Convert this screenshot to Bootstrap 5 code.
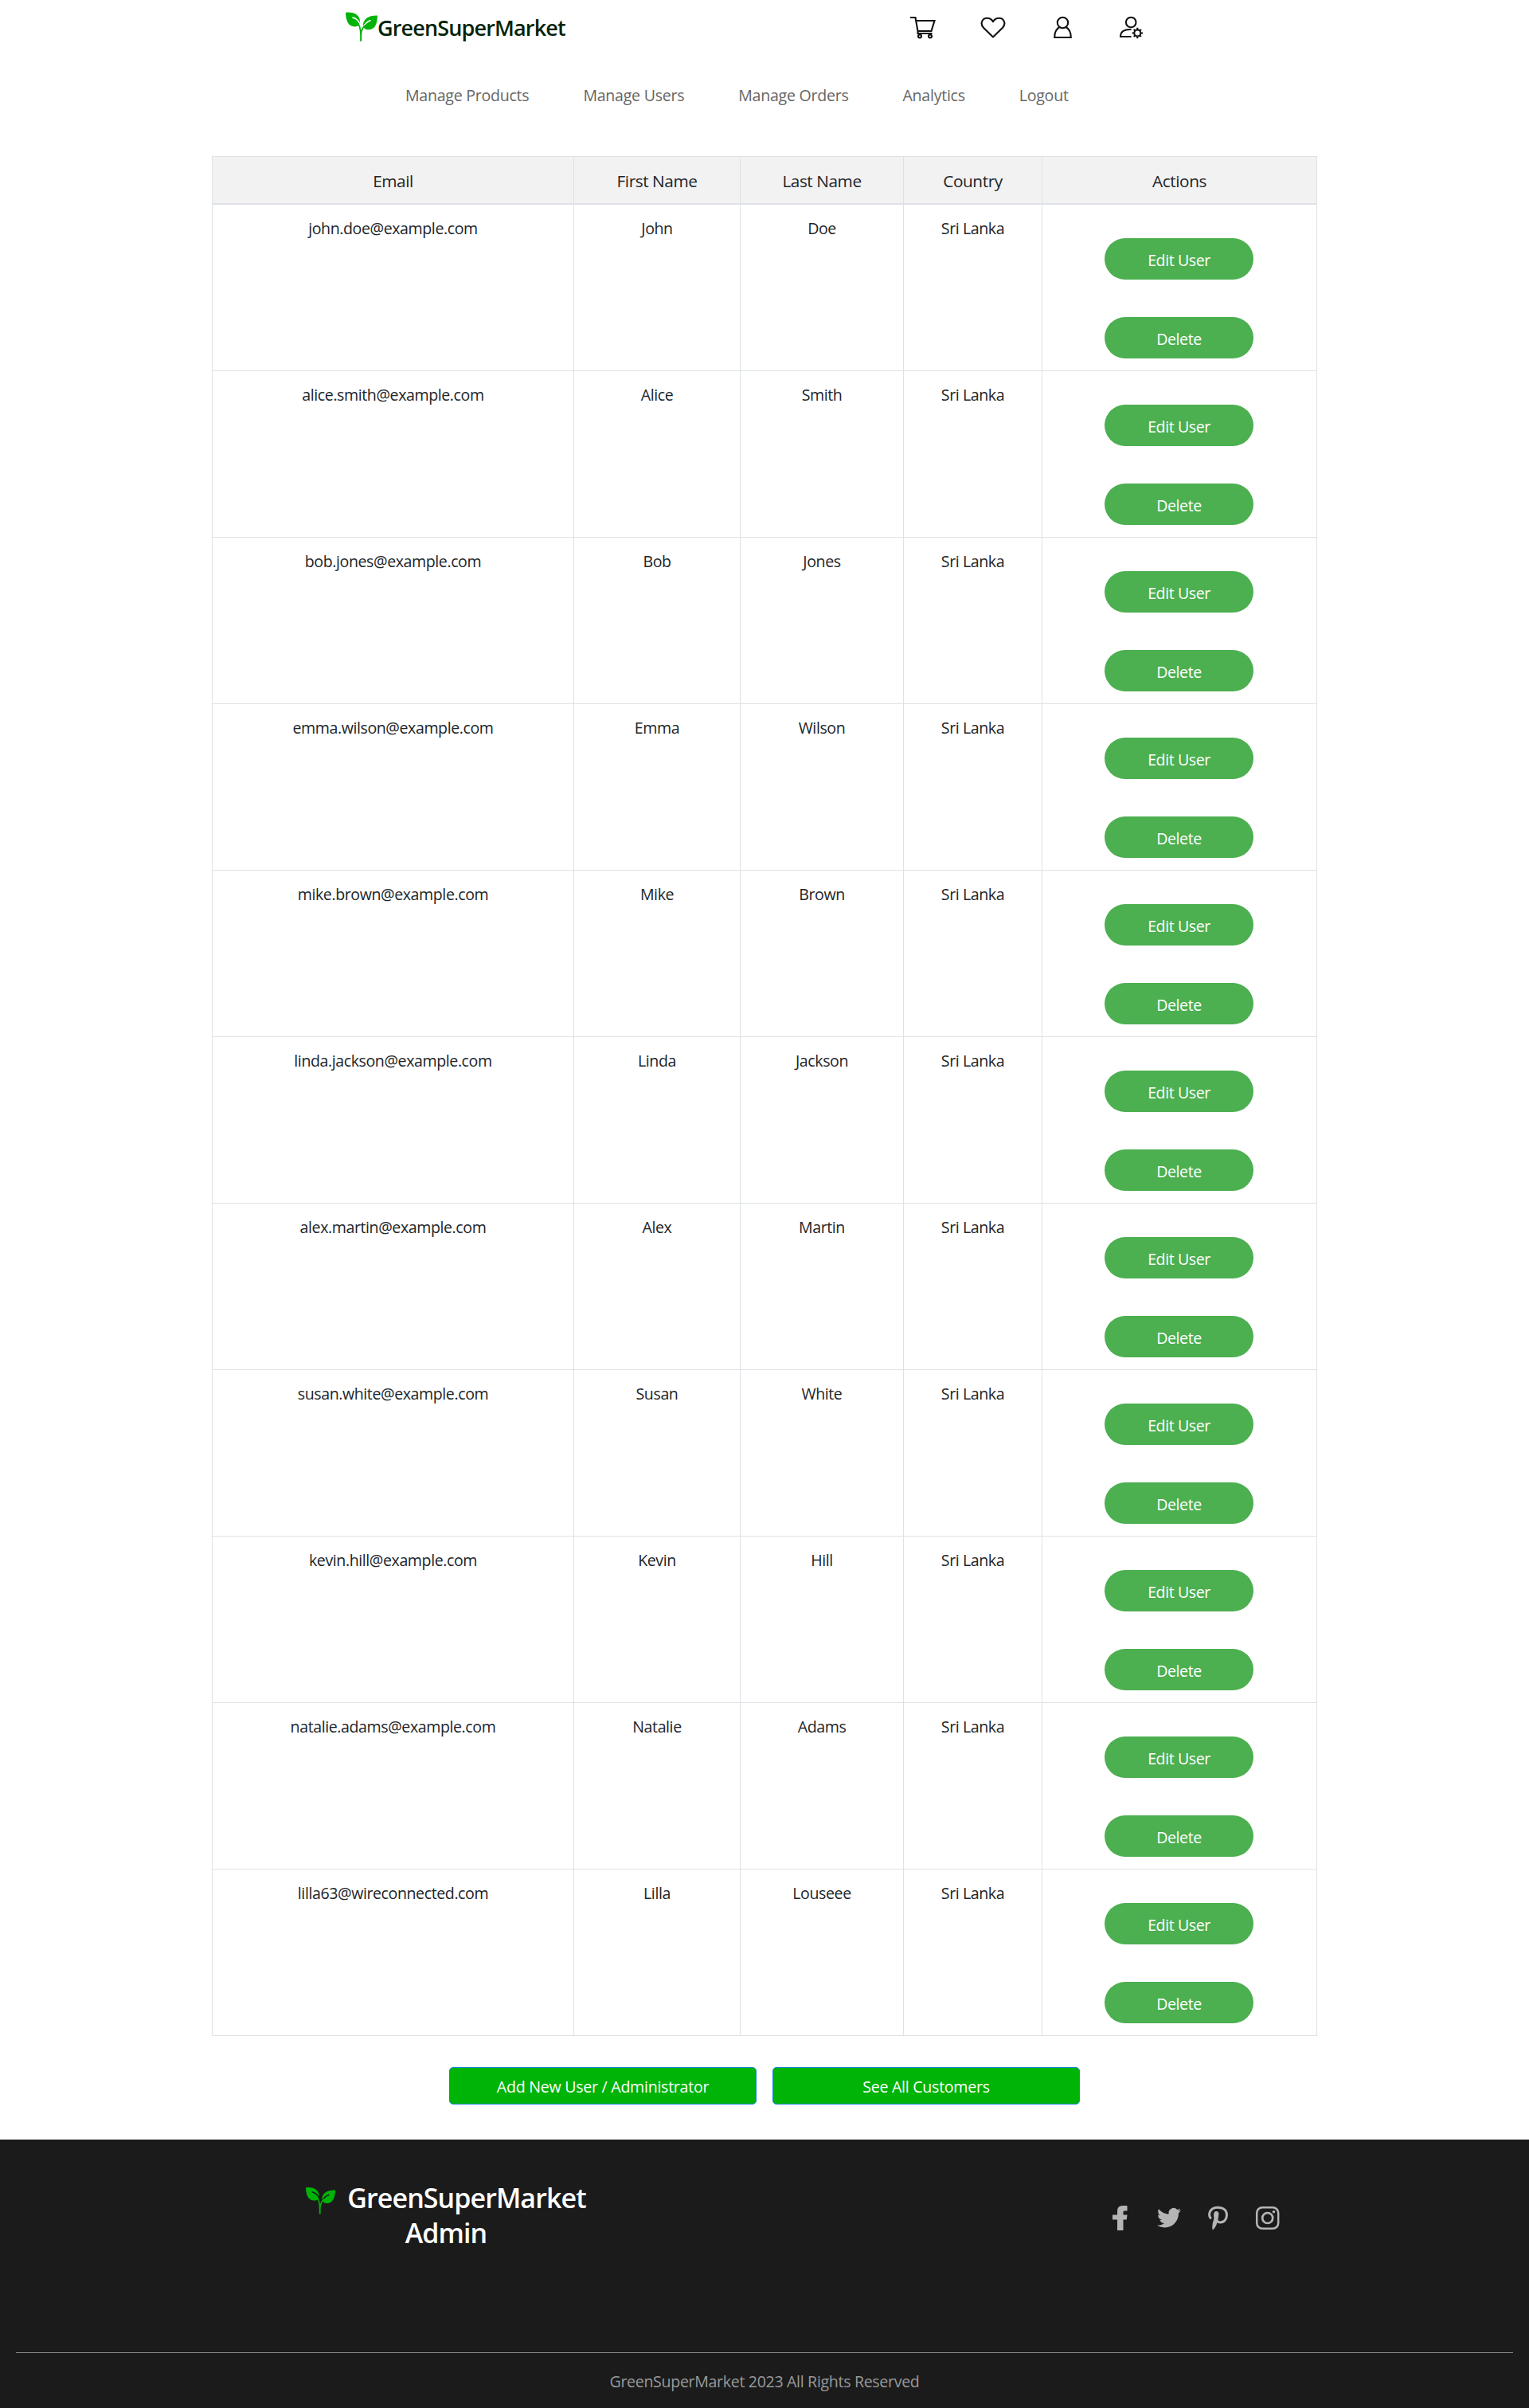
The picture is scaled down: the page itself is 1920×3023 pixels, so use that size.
<!DOCTYPE html>
<html lang="en">
<head>
<meta charset="utf-8">
<meta name="viewport" content="width=device-width, initial-scale=1">
<title>GreenSuperMarket Admin</title>
<link href="https://cdn.jsdelivr.net/npm/bootstrap@5.3.0/dist/css/bootstrap.min.css" rel="stylesheet">
<style>
body{font-family:"Open Sans","Noto Sans",sans-serif;font-size:19.6px;letter-spacing:-.27px;line-height:30px;color:#212529;background:#fff}
svg{display:block;flex:none}
.top-bar{height:70px;padding:0 483px 0 434px}
.brand{color:#03240a;font-size:27px;font-weight:600;letter-spacing:-.85px;line-height:36px;padding-top:17px}
.brand-logo{margin-top:15px}
.tools{padding-top:19px}
.tools svg{fill:none;stroke:#111;stroke-width:2.1}
.tool-cart{margin-right:55px}.tool-heart{margin-right:59px}.tool-user{margin-right:58px}
.main-nav{height:126px;padding:35px 0 0 509px;gap:68px}
.main-nav .nav-link{padding:0;color:#666}
.users{width:1388px;border-collapse:separate;border-spacing:0;table-layout:fixed;border:solid #dee2e6;border-width:1px 0 0 1px;margin:0 0 0 266px;text-align:center}
.users th,.users td{border:solid #dee2e6;border-width:0 1px 1px 0;padding:0;vertical-align:top}
.users th{height:60px;border-bottom-width:2px;background:#f2f2f2;font-weight:400;font-size:20.8px;letter-spacing:-.45px;vertical-align:middle;padding-top:1px}
.users td{height:209px;padding-top:15px;letter-spacing:-.42px}
.users td.acts{padding-top:42px}
.pill{display:block;width:187px;height:52px;margin:0 78px 47px;border:0;border-radius:26px;background:#4caf50;color:#fff;padding:4px 0 0;letter-spacing:-.42px}
.pill+.pill{margin-bottom:0}
.bottom-actions{gap:20px;padding:39px 0 44px}
.bottom-actions .btn{width:386px;height:47px;padding:2px 0 0;border:1px solid #1683d8;border-radius:5px;background:#00b307;color:#fff;font-size:inherit;letter-spacing:-.27px;line-height:inherit}
.site-footer{height:337px;background:#1b1b1b;padding:0 20px}
.foot-main{height:267px;padding:51px 293px 0 360px}
.foot-title{width:360px;color:#fff;font-size:34px;font-weight:600;line-height:44px;letter-spacing:-.92px}
.foot-logo{margin:8px 15px 0 0}
.social{height:32px;margin-top:31px}
.social svg{fill:#b5b5b5}
.copyright{border-top:1px solid #888;color:#999;padding-top:21px;letter-spacing:-.33px}
</style>
</head>
<body>
<svg width="0" height="0" class="position-absolute" aria-hidden="true">
  <symbol id="sprout" viewBox="0 0 120 110">
    <path fill="#00b307" d="M0 2C34-2 55 13 54 38Q52 48 46 53C18 60 1 45 0 2ZM120 13C119 50 108 68 82 66Q70 64 66 54C64 28 84 12 120 13Z"/>
    <path fill="none" stroke="var(--vein)" stroke-width="5" stroke-linecap="round" d="M27 21Q44 24 52 42M93 32Q76 38 67 56"/>
    <path fill="none" stroke="#00b307" stroke-width="5" d="M43 36Q56 52 57 84M76 48Q60 60 58 84"/>
    <path fill="none" stroke="#00b307" stroke-width="6" d="M57.500 78V110"/>
  </symbol>
</svg>

<header>
  <div class="top-bar d-flex justify-content-between align-items-start">
    <a class="d-flex align-items-start text-decoration-none" href="#">
      <svg class="brand-logo" width="40" height="37" style="--vein:#fff"><use href="#sprout"/></svg>
      <span class="brand">GreenSuperMarket</span>
    </a>
    <div class="tools d-flex">
      <svg class="tool-cart" width="33" height="30" viewBox="0 0 33 30"><path d="M0 3H6.500L9.500 20V23H27.500M7 7H30.500L26.500 20H9"/><circle cx="12" cy="26.500" r="2"/><circle cx="25" cy="26.500" r="2"/></svg>
      <svg class="tool-heart" width="32" height="30" viewBox="0 0 32 30"><path stroke-linejoin="round" d="M16 27.500L4.200 16C-1.200 10 3 3.800 8.500 3.800C12 3.800 14.500 5.500 16 8.200C17.500 5.500 20 3.800 23.500 3.800C29 3.800 33.200 10 27.800 16Z"/></svg>
      <svg class="tool-user" width="25" height="30" viewBox="0 0 25 30"><circle cx="12.500" cy="9.500" r="6.700"/><path d="M8.500 15C4 17.500 2.200 21 2.200 28H22.800C22.800 21 21 17.500 16.500 15"/></svg>
      <svg width="32" height="30" viewBox="0 0 32 30"><circle cx="15.200" cy="9" r="6.300"/><path d="M15.500 18C7 17.500 2 20.500 2 27H15.500"/><circle cx="23.300" cy="22.500" r="4"/><path d="M23.300 18.500V15.800M23.300 29.200V26.500M19.300 22.500H16.600M30 22.500H27.300M20.500 19.700L18.700 17.900M27.900 27.100L26.100 25.300M20.500 25.300L18.700 27.100M27.900 17.900L26.100 19.700"/></svg>
    </div>
  </div>
  <nav class="main-nav nav flex-nowrap align-items-start">
    <a class="nav-link" href="#">Manage Products</a>
    <a class="nav-link" href="#">Manage Users</a>
    <a class="nav-link" href="#">Manage Orders</a>
    <a class="nav-link" href="#">Analytics</a>
    <a class="nav-link" href="#">Logout</a>
  </nav>
</header>

<main>
  <table class="users">
    <colgroup><col style="width:454px"><col style="width:209px"><col style="width:205px"><col style="width:174px"><col style="width:345px"></colgroup>
    <thead><tr><th>Email</th><th>First Name</th><th>Last Name</th><th>Country</th><th>Actions</th></tr></thead>
    <tbody>
      <tr><td>john.doe@example.com</td><td>John</td><td>Doe</td><td>Sri Lanka</td><td class="acts"><button class="pill">Edit User</button><button class="pill">Delete</button></td></tr>
      <tr><td>alice.smith@example.com</td><td>Alice</td><td>Smith</td><td>Sri Lanka</td><td class="acts"><button class="pill">Edit User</button><button class="pill">Delete</button></td></tr>
      <tr><td>bob.jones@example.com</td><td>Bob</td><td>Jones</td><td>Sri Lanka</td><td class="acts"><button class="pill">Edit User</button><button class="pill">Delete</button></td></tr>
      <tr><td>emma.wilson@example.com</td><td>Emma</td><td>Wilson</td><td>Sri Lanka</td><td class="acts"><button class="pill">Edit User</button><button class="pill">Delete</button></td></tr>
      <tr><td>mike.brown@example.com</td><td>Mike</td><td>Brown</td><td>Sri Lanka</td><td class="acts"><button class="pill">Edit User</button><button class="pill">Delete</button></td></tr>
      <tr><td>linda.jackson@example.com</td><td>Linda</td><td>Jackson</td><td>Sri Lanka</td><td class="acts"><button class="pill">Edit User</button><button class="pill">Delete</button></td></tr>
      <tr><td>alex.martin@example.com</td><td>Alex</td><td>Martin</td><td>Sri Lanka</td><td class="acts"><button class="pill">Edit User</button><button class="pill">Delete</button></td></tr>
      <tr><td>susan.white@example.com</td><td>Susan</td><td>White</td><td>Sri Lanka</td><td class="acts"><button class="pill">Edit User</button><button class="pill">Delete</button></td></tr>
      <tr><td>kevin.hill@example.com</td><td>Kevin</td><td>Hill</td><td>Sri Lanka</td><td class="acts"><button class="pill">Edit User</button><button class="pill">Delete</button></td></tr>
      <tr><td>natalie.adams@example.com</td><td>Natalie</td><td>Adams</td><td>Sri Lanka</td><td class="acts"><button class="pill">Edit User</button><button class="pill">Delete</button></td></tr>
      <tr><td>lilla63@wireconnected.com</td><td>Lilla</td><td>Louseee</td><td>Sri Lanka</td><td class="acts"><button class="pill">Edit User</button><button class="pill">Delete</button></td></tr>
    </tbody>
  </table>
  <div class="bottom-actions d-flex justify-content-center">
    <button class="btn">Add New User / Administrator</button>
    <button class="btn">See All Customers</button>
  </div>
</main>

<footer class="site-footer">
  <div class="foot-main d-flex justify-content-between align-items-start">
    <div class="foot-title text-center">
      <div class="d-flex justify-content-center align-items-start">
        <svg class="foot-logo" width="37" height="35" style="--vein:#1b1b1b"><use href="#sprout"/></svg>
        <span>GreenSuperMarket</span>
      </div>
      <div>Admin</div>
    </div>
    <div class="social d-flex">
      <svg width="212" height="32" viewBox="0 0 212 32">
        <path d="M8 32V18.500H2V12.500H8V8Q8 1 14.500 1H20.500V7.500H17Q15.500 7.500 15.500 9V12.500H20.500L19.800 18.500H15.500V32Z"/>
        <path transform="translate(58 1.200) scale(1.250)" d="M23.950 4.570a10 10 0 0 1-2.820.77 4.960 4.960 0 0 0 2.160-2.720c-.95.550-2 .95-3.120 1.180a4.920 4.920 0 0 0-8.380 4.480C7.690 8.090 4.070 6.130 1.640 3.160a4.820 4.820 0 0 0-.67 2.480c0 1.710.87 3.210 2.190 4.100a4.900 4.900 0 0 1-2.230-.62v.06a4.920 4.920 0 0 0 3.950 4.830 5 5 0 0 1-2.210.08 4.940 4.940 0 0 0 4.600 3.420A9.870 9.870 0 0 1 0 19.540a14 14 0 0 0 7.550 2.210c9.050 0 14-7.500 14-13.980 0-.21 0-.42-.02-.63a9.940 9.940 0 0 0 2.460-2.550z"/>
        <path fill="none" stroke="#b5b5b5" stroke-width="3" stroke-linecap="round" d="M125 16.500C121.500 11 125 3.200 134 3.200C141.500 3.200 145.500 7.200 145.500 12.500C145.500 18 142 22 137.500 22C135 22 133.500 21 132.500 19"/>
        <path d="M129 12.500Q129 8 132.500 8Q136 8.500 135.300 12.500Q134 26 128.500 31H127.500Q126.500 25 129.500 17Z"/>
        <rect x="183.200" y="3.200" width="27" height="26.600" rx="7" fill="none" stroke="#b5b5b5" stroke-width="2.500"/>
        <circle cx="196.700" cy="16.500" r="6.500" fill="none" stroke="#b5b5b5" stroke-width="2.700"/><circle cx="204.500" cy="8.700" r="1.800"/>
      </svg>
    </div>
  </div>
  <div class="copyright text-center">GreenSuperMarket 2023 All Rights Reserved</div>
</footer>
<script src="https://cdn.jsdelivr.net/npm/bootstrap@5.3.0/dist/js/bootstrap.bundle.min.js"></script>
</body>
</html>
